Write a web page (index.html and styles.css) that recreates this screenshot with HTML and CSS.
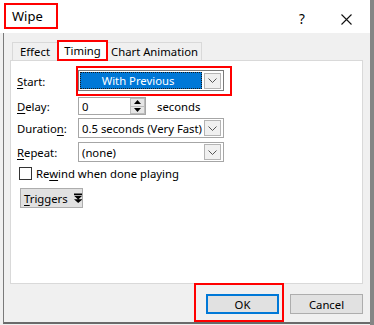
FILE: index.html
```html
<!DOCTYPE html>
<html>
<head>
<meta charset="utf-8">
<link rel="stylesheet" href="styles.css">
</head>
<body>
<div class="window">
  <header class="titlebar">
    <div class="title">Wipe</div>
    <div class="help">?</div>
    <div class="close">
      <svg width="11" height="11" viewBox="0 0 11 11"><path d="M0.5 0.5L10.5 10.5M10.5 0.5L0.5 10.5" stroke="#111" stroke-width="1.1" fill="none"/></svg>
    </div>
  </header>
  <main class="main">
    <div class="tabs">
      <div class="tab tab-effect">Effect</div>
      <div class="tab active">Timing</div>
      <div class="tab tab-chart">Chart Animation</div>
    </div>
    <section class="panel">
      <div class="row row-start">
        <div class="lbl"><u>S</u>tart:</div>
        <div class="hl">
          <div class="combo focused">
            <div class="sel">With Previous</div>
            <div class="drop"><svg width="9" height="5" viewBox="0 0 9 5"><path d="M0.5 0.5L4.5 4.5L8.5 0.5" stroke="#555" stroke-width="1" fill="none"/></svg></div>
          </div>
        </div>
      </div>
      <div class="row row-delay">
        <div class="lbl"><u>D</u>elay:</div>
        <div class="spin">
          <div class="val">0</div>
          <div class="spin-btns">
            <div class="sb"><svg width="7" height="4" viewBox="0 0 7 4"><path d="M0 4L3.5 0L7 4Z" fill="#000"/></svg></div>
            <div class="sb"><svg width="7" height="4" viewBox="0 0 7 4"><path d="M0 0L3.5 4L7 0Z" fill="#000"/></svg></div>
          </div>
        </div>
        <div class="unit">seconds</div>
      </div>
      <div class="row row-dur">
        <div class="lbl">Duratio<u>n</u>:</div>
        <div class="combo">
          <div class="val">0.5 seconds (Very Fast)</div>
          <div class="drop"><svg width="9" height="5" viewBox="0 0 9 5"><path d="M0.5 0.5L4.5 4.5L8.5 0.5" stroke="#555" stroke-width="1" fill="none"/></svg></div>
        </div>
      </div>
      <div class="row row-rep">
        <div class="lbl"><u>R</u>epeat:</div>
        <div class="combo">
          <div class="val">(none)</div>
          <div class="drop"><svg width="9" height="5" viewBox="0 0 9 5"><path d="M0.5 0.5L4.5 4.5L8.5 0.5" stroke="#555" stroke-width="1" fill="none"/></svg></div>
        </div>
      </div>
      <div class="row row-check">
        <div class="check"></div>
        <div class="check-lbl">Re<u>w</u>ind when done playing</div>
      </div>
      <div class="row row-trig">
        <div class="trig"><span><u>T</u>riggers</span>
          <svg width="9" height="11" viewBox="0 0 9 11"><path d="M0 0H9V1.6H0Z M0 2.6H9L4.5 6.6Z M0 6.4H9L4.5 10.4Z" fill="#000"/></svg>
        </div>
      </div>
    </section>
    <div class="actions">
      <div class="hl-ok"><div class="btn ok">OK</div></div>
      <div class="btn cancel">Cancel</div>
    </div>
  </main>
</div>
</body>
</html>
```
FILE: styles.css
```css
* { box-sizing: border-box; }
html, body { margin: 0; padding: 0; }
body {
  width: 374px; height: 325px; overflow: hidden;
  background: #f0f0f0;
  font-family: "Noto Sans", "Segoe UI", sans-serif;
  font-size: 11.3px; color: #000;
}
u { text-decoration: underline; text-underline-offset: 2px; text-decoration-thickness: 1px; }
.window {
  width: 374px; height: 325px;
  border-right: 4px solid #858585;
  display: flex; flex-direction: column;
  background: #f0f0f0;
}
.titlebar {
  flex: none; height: 33px; background: #fff;
  display: flex; align-items: flex-start;
  padding: 3px 0 0 4px;
}
.title {
  width: 54px; height: 26px;
  border: 2px solid #f00;
  display: flex; align-items: center;
  padding-left: 6px; font-size: 13px;
}
.help { margin-left: 241px; margin-top: 8px; font-size: 13.5px; line-height: 16px; }
.close { margin-left: 36px; margin-top: 11px; line-height: 0; }

.main {
  margin-left: 3px;
  border-left: 1px solid #7a7a7a;
  border-bottom: 2px solid #6a6a6a;
  height: 291px;
  padding: 9px 7px 0 0;
  display: flex; flex-direction: column;
}
.tabs { display: flex; height: 18px; margin-left: 8px; align-items: flex-start; flex: none; }
.tab {
  height: 18px;
  border: 1px solid #d9d9d9; border-bottom: none;
  display: flex; align-items: center; justify-content: center;
  background: #f0f0f0;
}
.tab-effect { width: 45px; border-right: none; }
.tab-chart { width: 94px; border-left: none; }
.tab.active {
  width: 51px; height: 21px; margin-top: -2px;
  border: 2px solid #f00; background: #fff;
  position: relative; z-index: 1;
}
.panel {
  margin-left: 6px; width: 353px; height: 224px; flex: none;
  border: 1px solid #d9d9d9; background: #fff;
  padding: 5px 0 0 6px;
}
.row { display: flex; align-items: center; }
.lbl { width: 61px; flex: none; }
.row-start .lbl { width: 59px; }
.hl {
  border: 2px solid #f00;
  padding: 2px 6px 3px 0;
}
.combo {
  width: 146px; height: 20px;
  border: 1px solid #a6a6a6; background: #fff;
  display: flex; align-items: center;
  padding: 0 1px 0 0;
}
.combo.focused { height: 21px; border-color: #7a7a7a; }
.combo .val { flex: 1; min-width: 0; overflow: hidden; padding-left: 3px; white-space: nowrap; }
.sel {
  flex: 1; height: 17px; margin: 0 1px 0 1px;
  background: #0078d7; color: #fff;
  border: 1px dotted #1a1a1a;
  display: flex; align-items: center; justify-content: center;
  padding-right: 6px;
}
.drop {
  width: 17px; height: 16px; flex: none;
  border: 1px solid #b4b4b4; background: #f0f0f0;
  display: flex; align-items: center; justify-content: center;
  margin-right: 1px; margin-left: 1px;
}
.row-delay { margin-top: 1px; }
.spin {
  width: 68px; height: 18px;
  border: 1px solid #a6a6a6; background: #fff;
  display: flex; align-items: stretch;
}
.spin .val { flex: 1; padding-left: 3px; display: flex; align-items: center; }
.spin-btns { width: 15px; display: flex; flex-direction: column; }
.sb {
  flex: 1; background: #e6e6e6; border: 1px solid #bcbcbc;
  display: flex; align-items: center; justify-content: center;
}
.sb + .sb { border-top: none; }
.unit { margin-left: 11px; }
.row-dur { margin-top: 3px; }
.row-rep { margin-top: 4px; }
.row-check { margin-top: 4px; height: 14px; }
.check {
  width: 13px; height: 13px; margin-left: 2px;
  border: 1px solid #333; background: #fff;
}
.check-lbl { margin-left: 4px; }
.row-trig { margin-top: 8px; }
.trig {
  margin-left: 3px; width: 63px; height: 20px;
  background: #e1e1e1; border: 1px solid #adadad;
  display: flex; align-items: center;
  padding-left: 3px; gap: 6px;
}
.actions {
  display: flex; justify-content: flex-end; align-items: flex-start;
  margin-top: -1px;
}
.hl-ok { border: 2px solid #f00; padding: 9px 3px 6px 10px; }
.btn {
  width: 73px; height: 20px;
  background: #e1e1e1;
  display: flex; align-items: center; justify-content: center;
}
.ok { border: 2px solid #0078d7; }
.cancel { border: 1px solid #adadad; margin-left: 6px; margin-top: 11px; }
```
